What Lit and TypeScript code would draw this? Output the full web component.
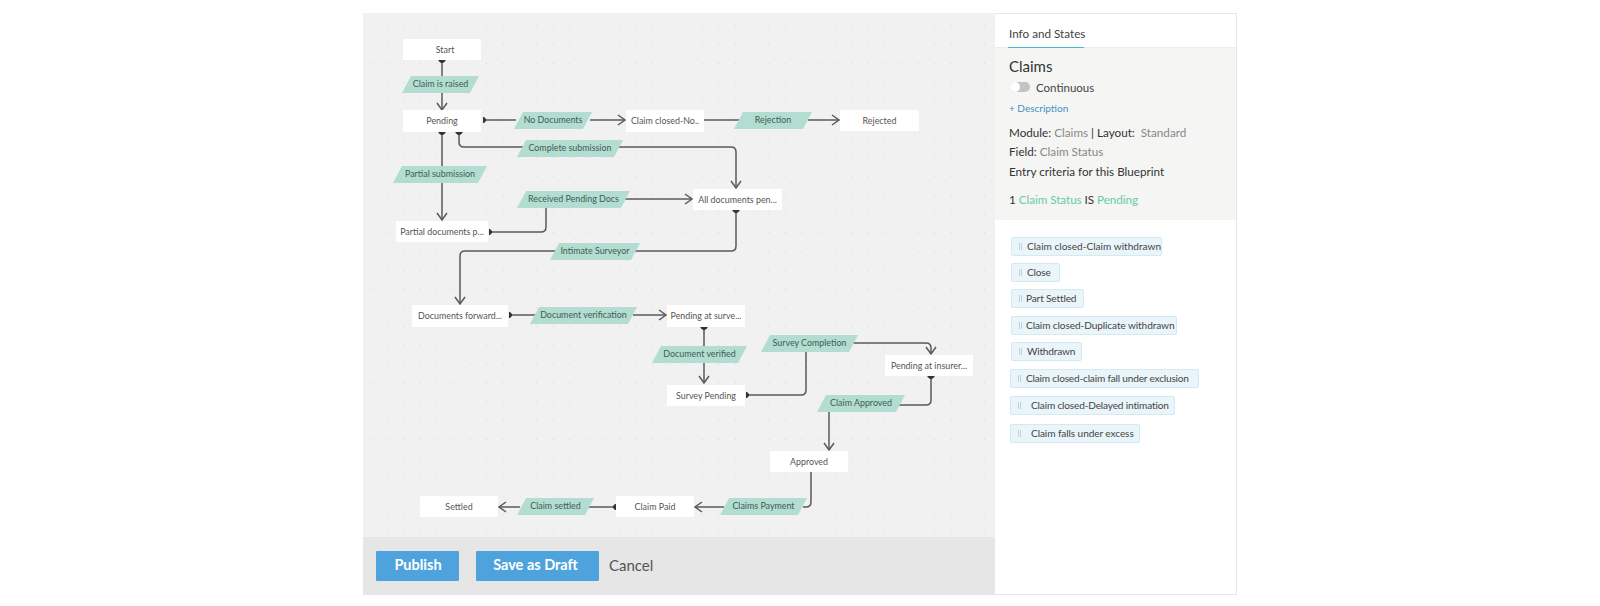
import { LitElement, html, css, svg } from "lit";
import { customElement } from "lit/decorators.js";

const OX = 363;
const OY = 13;

const nodes: [string, number, number, number, number, number?][] = [
  ["Start", 403, 39, 78, 21, 6],
  ["Pending", 403, 110, 78, 22],
  ["Partial documents p...", 396, 221, 92, 21],
  ["Claim closed-No..", 626, 110, 78, 22],
  ["Rejected", 840, 110, 79, 21],
  ["All documents pen...", 693, 189, 89, 21],
  ["Documents forward...", 412, 305, 96, 22],
  ["Pending at surve...", 667, 305, 78, 22],
  ["Survey Pending", 667, 385, 78, 21],
  ["Pending at insurer...", 885, 355, 88, 21],
  ["Approved", 770, 451, 78, 21],
  ["Settled", 420, 496, 78, 21],
  ["Claim Paid", 616, 496, 78, 21],
];

const labels: [string, number, number, number][] = [
  ["Claim is raised", 402, 76, 77],
  ["No Documents", 514, 112, 78],
  ["Rejection", 734, 112, 78],
  ["Complete submission", 517, 140, 106],
  ["Partial submission", 393, 166, 94],
  ["Received Pending Docs", 517, 191, 113],
  ["Intimate Surveyor", 550, 243, 90],
  ["Document verification", 530, 307, 107],
  ["Document verified", 652, 346, 95],
  ["Survey Completion", 761, 335, 97],
  ["Claim Approved", 817, 395, 88],
  ["Claims Payment", 720, 498, 87],
  ["Claim settled", 517, 498, 77],
];

const lines = [
  "M442 61V110",
  "M442 132V220",
  "M483 120H516",
  "M590 120H625",
  "M704 120H740",
  "M808 120H839",
  "M459 132V142Q459 147 464 147H731Q736 147 736 152V188",
  "M623 199H692",
  "M546 208V227Q546 232 541 232H489",
  "M736 211V246Q736 251 731 251H465Q460 251 460 256V304",
  "M509 315H536",
  "M633 315H666",
  "M704 327V383",
  "M746 395H801Q806 395 806 390V352",
  "M853 343H926Q931 343 931 348V354",
  "M931 377V400Q931 405 926 405H899",
  "M829 412V450",
  "M811 472V502Q811 507 806 507H803",
  "M724 507H695",
  "M520 507H499",
  "M588 507H615",
];

const arrows: [number, number, "d" | "r" | "l"][] = [
  [442, 110, "d"],
  [442, 220, "d"],
  [625, 120, "r"],
  [839, 120, "r"],
  [736, 188, "d"],
  [692, 199, "r"],
  [460, 304, "d"],
  [666, 315, "r"],
  [704, 383, "d"],
  [931, 354, "d"],
  [829, 450, "d"],
  [695, 507, "l"],
  [499, 507, "l"],
];

const arrowPath = (x: number, y: number, dir: string) => {
  if (dir === "d") return `M${x - 5} ${y - 7}L${x} ${y}L${x + 5} ${y - 7}`;
  if (dir === "r") return `M${x - 7} ${y - 5}L${x} ${y}L${x - 7} ${y + 5}`;
  return `M${x + 7} ${y - 5}L${x} ${y}L${x + 7} ${y + 5}`;
};

const caps: [number, number, "d" | "r" | "l"][] = [
  [442, 60, "d"],
  [442, 132, "d"],
  [459, 132, "d"],
  [736, 210, "d"],
  [704, 327, "d"],
  [931, 376, "d"],
  [483, 120, "r"],
  [489, 232, "r"],
  [509, 315, "r"],
  [746, 395, "r"],
  [616, 507, "l"],
];

const capPath = (x: number, y: number, dir: string) => {
  if (dir === "d") return `M${x - 3.5} ${y}H${x + 3.5}V${y + 1}L${x + 1} ${y + 3}H${x - 1}L${x - 3.5} ${y + 1}Z`;
  if (dir === "r") return `M${x} ${y - 3}V${y + 3}H${x + 1}L${x + 3} ${y + 1}V${y - 1}L${x + 1} ${y - 3}Z`;
  return `M${x} ${y - 3}V${y + 3}H${x - 1}L${x - 3} ${y + 1}V${y - 1}L${x - 1} ${y - 3}Z`;
};

const chips: [string, number, number, number, number, number][] = [
  ["Claim closed-Claim withdrawn", 0, 151, 5, 0, 0],
  ["Close", 7, 49, 5, 0, -0.2],
  ["Part Settled", 7, 73, 4, 0, -0.15],
  ["Claim closed-Duplicate withdrawn", 8, 166, 4, 0, -0.1],
  ["Withdrawn", 7, 71, 5, 0, -0.2],
  ["Claim closed-claim fall under exclusion", 8, 189, 5, -1, -0.19],
  ["Claim closed-Delayed intimation", 8, 165, 10, -1, -0.17],
  ["Claim falls under excess", 9, 130, 10, -1, -0.09],
];

@customElement("app-root")
export class AppRoot extends LitElement {
  static styles = css`
    :host {
      display: block;
      width: 1600px;
      height: 606px;
      background: #fff;
      font-family: Lato, "Liberation Sans", sans-serif;
      box-sizing: border-box;
      padding: 13px 0 11px 363px;
      overflow: hidden;
    }
    .layout {
      display: flex;
      height: 582px;
      width: 874px;
    }
    .left {
      width: 632px;
      display: flex;
      flex-direction: column;
    }
    .canvas {
      position: relative;
      flex: 1;
      background-color: #f1f1f1;
      background-image: radial-gradient(circle, #dadada 0.7px, transparent 1px);
      background-size: 16.6px 18.8px;
      background-position: -0.8px 3.6px;
    }
    .canvas svg {
      position: absolute;
      inset: 0;
    }
    .node {
      position: absolute;
      background: #fff;
      color: #555;
      font-size: 8.9px;
      box-sizing: border-box;
      padding-bottom: 1px;
      display: flex;
      align-items: center;
      justify-content: center;
      white-space: nowrap;
    }
    .label {
      position: absolute;
      height: 17px;
      background: #b2ddd0;
      color: #3f5c54;
      font-size: 8.9px;
      box-sizing: border-box;
      padding-bottom: 2px;
      display: flex;
      align-items: center;
      justify-content: center;
      white-space: nowrap;
      clip-path: polygon(9px 0, 100% 0, calc(100% - 9px) 100%, 0 100%);
    }
    .footer {
      height: 58px;
      flex: none;
      background: #e6e6e6;
      display: flex;
      align-items: center;
      padding-left: 13px;
      box-sizing: border-box;
    }
    .btn {
      height: 30px;
      background: #4fa3dd;
      color: #fff;
      font-weight: 700;
      font-size: 14.5px;
      display: flex;
      align-items: center;
      justify-content: center;
      border-radius: 1px;
      box-sizing: border-box;
      padding-bottom: 3px;
    }
    .publish {
      width: 83px;
      margin-right: 17px;
      padding-left: 1px;
    }
    .draft {
      width: 123px;
      margin-right: 10px;
      padding-right: 4px;
    }
    .cancel {
      color: #555;
      font-size: 15px;
      padding-bottom: 3px;
    }
    .panel {
      width: 242px;
      box-sizing: border-box;
      border: 1px solid #e6e6e6;
      border-left: none;
      background: #fff;
      color: #333;
      font-size: 11.7px;
    }
    .tabs {
      height: 34px;
      box-sizing: border-box;
      padding-left: 13px;
      border-bottom: 1px solid #ececec;
      display: flex;
    }
    .tab {
      border-bottom: 1.5px solid #52b5d8;
      height: 34px;
      box-sizing: border-box;
      padding: 11px 0 0 1px;
      width: 76px;
      white-space: nowrap;
      font-size: 11.7px;
      color: #444;
      line-height: 16px;
    }
    .info {
      height: 172px;
      box-sizing: border-box;
      background: #f5f5f3;
      padding: 9px 13px 0 14px;
    }
    .title {
      font-size: 15px;
      line-height: 18px;
      color: #333;
    }
    .toggle-row {
      display: flex;
      align-items: center;
      gap: 6px;
      margin: 5px 0 0 1px;
      height: 14px;
      font-size: 11.5px;
      color: #444;
    }
    .toggle {
      position: relative;
      width: 20px;
      height: 10px;
      border-radius: 5px;
      background: #c4c4c4;
    }
    .toggle::before {
      content: "";
      position: absolute;
      left: 0;
      top: 0;
      width: 10px;
      height: 10px;
      border-radius: 50%;
      background: #fff;
    }
    .desc {
      color: #3d93c4;
      font-size: 10px;
      margin-top: 7px;
      line-height: 14px;
    }
    .row {
      line-height: 19.3px;
      white-space: nowrap;
    }
    .rows {
      margin-top: 8px;
    }
    .muted {
      color: #888;
    }
    .crit {
      margin-top: 8px;
      line-height: 20px;
      letter-spacing: -0.05px;
    }
    .green {
      color: #67cca4;
    }
    .chips {
      display: flex;
      flex-direction: column;
      align-items: flex-start;
      padding: 17px 0 0 16px;
    }
    .chip {
      height: 19px;
      box-sizing: border-box;
      background: #eaf5fa;
      border: 1px solid #d3e9f3;
      border-radius: 2px;
      display: flex;
      align-items: center;
      font-size: 10.1px;
      color: #444;
      white-space: nowrap;
      padding-bottom: 1px;
    }
    .grip {
      width: 3px;
      height: 7px;
      flex: none;
      margin-left: 7px;
      border-left: 1px solid #bcd3dd;
      border-right: 1px solid #bcd3dd;
      box-sizing: border-box;
    }
  `;

  render() {
    return html`
      <div class="layout">
        <div class="left">
          <div class="canvas">
            <svg width="632" height="524" viewBox="${OX} ${OY} 632 524" fill="none">
              ${lines.map((d) => svg`<path d=${d} stroke="#5a5a5a" stroke-width="1.5"></path>`)}
              ${arrows.map(
                ([x, y, dir]) => svg`<path d=${arrowPath(x, y, dir)} stroke="#5a5a5a" stroke-width="1.5"></path>`,
              )}
              ${caps.map(([x, y, dir]) => svg`<path d=${capPath(x, y, dir)} fill="#333"></path>`)}
            </svg>
            ${nodes.map(
              ([t, x, y, w, h, pl]) =>
                html`<div class="node" style="left:${x - OX}px;top:${y - OY}px;width:${w}px;height:${h}px;padding-left:${pl ?? 0}px">${t}</div>`,
            )}
            ${labels.map(
              ([t, x, y, w]) =>
                html`<div class="label" style="left:${x - OX}px;top:${y - OY}px;width:${w}px">${t}</div>`,
            )}
          </div>
          <div class="footer">
            <div class="btn publish">Publish</div>
            <div class="btn draft">Save as Draft</div>
            <div class="cancel">Cancel</div>
          </div>
        </div>
        <div class="panel">
          <div class="tabs"><div class="tab">Info and States</div></div>
          <div class="info">
            <div class="title">Claims</div>
            <div class="toggle-row"><span class="toggle"></span><span>Continuous</span></div>
            <div class="desc">+ Description</div>
            <div class="rows">
              <div class="row">Module: <span class="muted">Claims</span> | Layout: &nbsp;<span class="muted">Standard</span></div>
              <div class="row">Field: <span class="muted">Claim Status</span></div>
              <div class="row">Entry criteria for this Blueprint</div>
            </div>
            <div class="crit">1 <span class="green">Claim Status</span> IS <span class="green">Pending</span></div>
          </div>
          <div class="chips">
            ${chips.map(
              ([t, mt, w, gap, ml, ls]) => html`<div class="chip" style="margin-top:${mt}px;margin-left:${ml}px;width:${w}px">
                <span class="grip"></span><span style="margin-left:${gap}px;letter-spacing:${ls}px">${t}</span>
              </div>`,
            )}
          </div>
        </div>
      </div>
    `;
  }
}
